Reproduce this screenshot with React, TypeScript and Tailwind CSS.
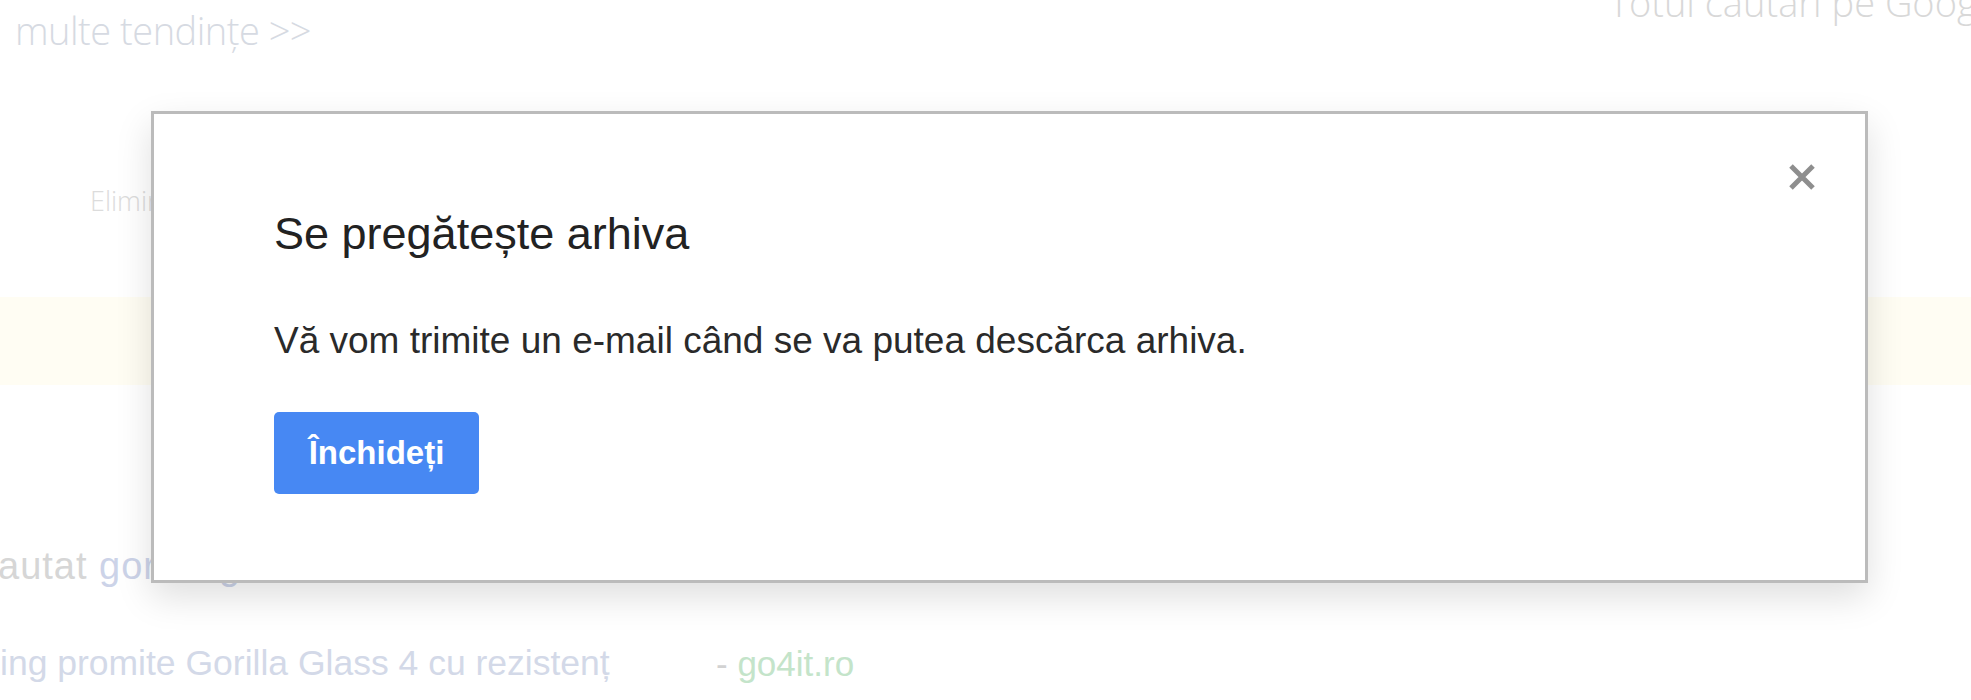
import React from "react";

function CloseIcon() {
  return (
    <svg viewBox="0 0 32 32" className="h-[32px] w-[32px]" fill="none">
      <path
        d="M5 5L27 27M27 5L5 27"
        stroke="#8e8e8e"
        strokeWidth="5"
        strokeLinecap="butt"
      />
    </svg>
  );
}

function ArchiveDialog() {
  return (
    <div className="absolute left-[151px] top-[111px] h-[472px] w-[1717px] border-[3px] border-[#bbbbbb] bg-white pl-[120px] pt-[94px] shadow-[0_14px_34px_rgba(0,0,0,0.13)]">
      <button className="absolute right-[47px] top-[47px]" aria-label="Închideți">
        <CloseIcon />
      </button>

      <h2 className="text-[45px] leading-[52px] text-[#222222]">
        Se pregătește arhiva
      </h2>

      <p className="mt-[60px] text-[37px] leading-[42px] text-[#2a2a2a]">
        Vă vom trimite un e-mail când se va putea descărca arhiva.
      </p>

      <button className="mt-[50px] flex h-[82px] w-[205px] items-center justify-center rounded-[5px] bg-[#4788f3] text-[33px] font-bold text-white">
        Închideți
      </button>
    </div>
  );
}

export default function App() {
  return (
    <div className="relative h-[700px] w-[1971px] overflow-hidden bg-white font-['Liberation_Sans',Arial,sans-serif]">
      <div className="flex flex-col">
        <div className="flex h-[60px] items-center justify-between">
          <span className="pl-[15px] font-['Open_Sans',sans-serif] text-[38px] font-light tracking-[-0.5px] text-[#d6dae2]">
            multe tendințe &gt;&gt;
          </span>
          <span className="-mt-[56px] w-[362px] whitespace-nowrap font-['Open_Sans',sans-serif] text-[38px] font-light text-[#d8d8d8]">
            Totul căutări pe Google
          </span>
        </div>

        <div className="mt-[111px] flex h-[60px] items-center pl-[90px]">
          <span className="font-['Open_Sans',sans-serif] text-[27px] font-light text-[#dcdcdc]">
            Eliminați
          </span>
        </div>

        <div className="mt-[66px] h-[88px] bg-[#fffdf3]" />

        <div className="mt-[151px] flex h-[60px] items-center whitespace-nowrap">
          <span className="-ml-[2px] text-[38px] tracking-[1px] text-[#d6d6d6]">
            autat <span className="text-[#ccd3e8]">gorilla glass</span>
          </span>
        </div>

        <div className="mt-[38px] flex h-[60px] items-center whitespace-nowrap">
          <span className="w-[716px] text-[35.5px] text-[#d3d9e8]">
            ing promite Gorilla Glass 4 cu rezistenț
          </span>
          <span className="text-[35px] text-[#d2d2d2]">
            - <span className="text-[#c4e4ca]">go4it.ro</span>
          </span>
        </div>
      </div>

      <ArchiveDialog />
    </div>
  );
}
